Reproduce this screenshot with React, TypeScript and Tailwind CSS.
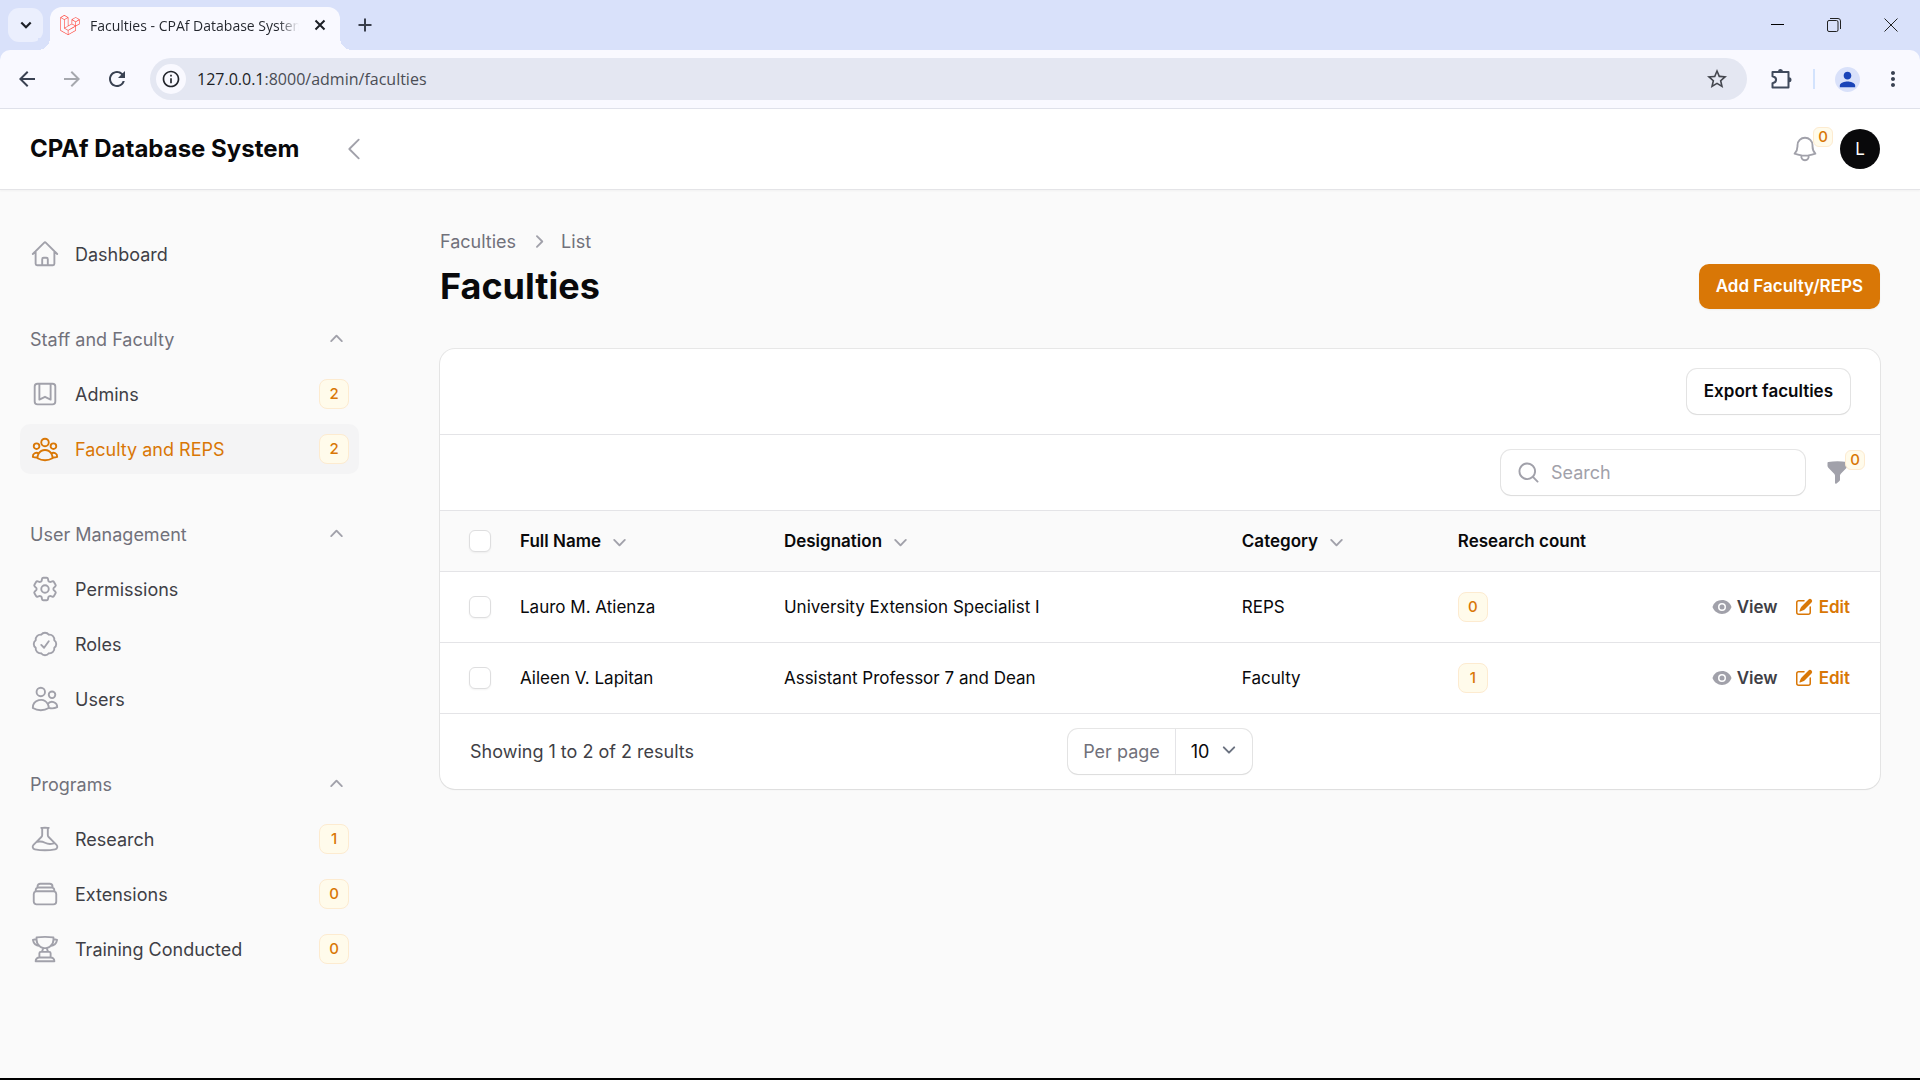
import type { ComponentType, ReactNode } from "react";
import {
  HiOutlineHome,
  HiOutlineBookmarkSquare,
  HiOutlineUserGroup,
  HiOutlineCog6Tooth,
  HiOutlineCheckBadge,
  HiOutlineUsers,
  HiOutlineBeaker,
  HiOutlineRectangleStack,
  HiOutlineTrophy,
  HiOutlineChevronLeft,
  HiOutlineBell,
} from "react-icons/hi2";
import {
  HiMiniChevronUp,
  HiMiniChevronDown,
  HiMiniChevronRight,
  HiMiniMagnifyingGlass,
  HiMiniFunnel,
  HiMiniEye,
  HiMiniPencilSquare,
} from "react-icons/hi2";
import {
  MdArrowBack,
  MdArrowForward,
  MdRefresh,
  MdOutlineInfo,
  MdStarBorder,
  MdPerson,
  MdMoreVert,
} from "react-icons/md";
import { SiLaravel } from "react-icons/si";

type Icon = ComponentType<{ className?: string }>;
type NavItem = { label: string; icon: Icon; badge?: number; active?: boolean };
type NavGroup = { label: string; items: NavItem[] };

const groups: NavGroup[] = [
  {
    label: "Staff and Faculty",
    items: [
      { label: "Admins", icon: HiOutlineBookmarkSquare, badge: 2 },
      { label: "Faculty and REPS", icon: HiOutlineUserGroup, badge: 2, active: true },
    ],
  },
  {
    label: "User Management",
    items: [
      { label: "Permissions", icon: HiOutlineCog6Tooth },
      { label: "Roles", icon: HiOutlineCheckBadge },
      { label: "Users", icon: HiOutlineUsers },
    ],
  },
  {
    label: "Programs",
    items: [
      { label: "Research", icon: HiOutlineBeaker, badge: 1 },
      { label: "Extensions", icon: HiOutlineRectangleStack, badge: 0 },
      { label: "Training Conducted", icon: HiOutlineTrophy, badge: 0 },
    ],
  },
];

const faculties = [
  { name: "Lauro M. Atienza", designation: "University Extension Specialist I", category: "REPS", research: 0 },
  { name: "Aileen V. Lapitan", designation: "Assistant Professor 7 and Dean", category: "Faculty", research: 1 },
];

function PuzzleIcon() {
  return (
    <svg viewBox="0 0 24 24" className="size-6" fill="none" stroke="#404a5c" strokeWidth="2" strokeLinejoin="round">
      <path d="M3.5 5h16v15.500h-16v-4.200c2.800-.6 3.600-1.800 3.600-3.500s-.8-2.900-3.600-3.500z" />
      <path d="M9 4.500a2.500 2.500 0 0 1 5 0zM20 10.200a2.500 2.500 0 0 1 0 5z" fill="#404a5c" stroke="none" />
    </svg>
  );
}

function BrowserChrome() {
  return (
    <div className="bg-[#d9e1fa] font-['Open_Sans',sans-serif]">
      <div className="flex h-[50px] items-end">
        <button aria-label="Search tabs" className="mb-2 ml-2 grid h-[34px] w-[35px] place-items-center rounded-[11px] bg-[#ebeffd]">
          <svg viewBox="0 0 12 12" className="size-3" fill="none" stroke="#1c1f26" strokeWidth="2.2">
            <path d="M1.300 3.500 6 8.200l4.700-4.700" />
          </svg>
        </button>
        <div className="relative ml-[7px] flex h-[43px] w-[290px] items-center rounded-t-[12px] bg-[#f9f9ff] pr-[10px] pb-[7px] pl-[10px]">
          <span className="absolute bottom-0 -left-3 size-3 bg-[radial-gradient(circle_at_0_0,#d9e1fa_12px,#f9f9ff_12px)]" />
          <span className="absolute -right-3 bottom-0 size-3 bg-[radial-gradient(circle_at_100%_0,#d9e1fa_12px,#f9f9ff_12px)]" />
          <SiLaravel className="size-5 shrink-0 text-[#ff4a40]" />
          <span className="ml-[10px] w-[209px] overflow-hidden bg-linear-to-r from-[#23262d] from-90% to-transparent bg-clip-text text-[14px] whitespace-nowrap text-transparent">
            Faculties - CPAf Database System
          </span>
          <button aria-label="Close tab" className="ml-auto grid size-5 place-items-center">
            <svg viewBox="0 0 12 12" className="size-3" fill="none" stroke="#1c1f26" strokeWidth="2">
              <path d="m1.500 1.500 9 9m0-9-9 9" />
            </svg>
          </button>
        </div>
        <button aria-label="New tab" className="mb-[15px] ml-[15px] grid size-5 place-items-center">
          <svg viewBox="0 0 14 14" className="size-[14px]" fill="none" stroke="#3a3f4c" strokeWidth="2">
            <path d="M7 .5v13M.5 7h13" />
          </svg>
        </button>
        <div className="ml-auto flex h-full items-center">
          <button aria-label="Minimize" className="grid h-full w-14 place-items-center">
            <svg viewBox="0 0 14 14" className="size-[14px]" stroke="#000" fill="none"><path d="M0 6.500h13" /></svg>
          </button>
          <button aria-label="Restore" className="grid h-full w-14 place-items-center">
            <svg viewBox="0 0 14 14" className="size-[14px]" stroke="#222" fill="none">
              <rect x=".5" y="2.500" width="10.500" height="11" rx="1.500" />
              <path d="M3 .5h8q2.500 0 2.500 2.500v8" />
            </svg>
          </button>
          <button aria-label="Close" className="grid h-full w-[58px] place-items-center">
            <svg viewBox="0 0 14 14" className="size-[14px]" stroke="#222" fill="none"><path d="M.5.5l13 13M13.500.5l-13 13" /></svg>
          </button>
        </div>
      </div>
      <div className="flex h-[59px] items-center rounded-t-[10px] border-b border-[#dfe1ea] bg-[#f9f9ff] pr-[15px] pl-[15px] text-[#3a4252]">
        <button aria-label="Back"><MdArrowBack className="size-6" /></button>
        <button aria-label="Forward" className="ml-[21px] text-[#a6a8ae]"><MdArrowForward className="size-6" /></button>
        <button aria-label="Reload" className="ml-[21px]"><MdRefresh className="size-6" /></button>
        <div className="ml-[21px] flex h-[42px] flex-1 items-center rounded-full bg-[#e4e7f2] pr-[18px] pl-[6px]">
          <button aria-label="Site information" className="grid size-[30px] place-items-center rounded-full bg-[#f9f9ff] text-[#22252c]">
            <MdOutlineInfo className="size-5" />
          </button>
          <div className="ml-[11px] flex-1 text-[16px] text-[#4a4d55]">
            <span className="text-[#1c1f26]">127.0.0.1</span>:8000/admin/faculties
          </div>
          <button aria-label="Bookmark" className="text-[#44474f]"><MdStarBorder className="size-6" /></button>
        </div>
        <button aria-label="Extensions" className="ml-[22px]"><PuzzleIcon /></button>
        <span className="ml-5 h-5 w-[2px] bg-[#d3e3fd]" />
        <button aria-label="Profile" className="ml-5 grid size-[25px] place-items-center rounded-full bg-[#d9e1fa] text-[#1a44b8]">
          <MdPerson className="size-[23px]" />
        </button>
        <button aria-label="Menu" className="ml-[21px]"><MdMoreVert className="size-6" /></button>
      </div>
    </div>
  );
}

function Badge({ children }: { children: ReactNode }) {
  return (
    <span className="inline-grid h-[30px] min-w-[30px] place-items-center rounded-lg border border-[#fdebd0] bg-amber-50 px-1 text-[15px] leading-5 font-medium text-[#d97706]">
      {children}
    </span>
  );
}

function CornerBadge({ place, children }: { place: string; children: ReactNode }) {
  return (
    <span className={`absolute grid size-5 place-items-center rounded-md border border-[#fdebd0] bg-amber-50 text-[15px] leading-4 font-medium text-[#d97706] ${place}`}>
      {children}
    </span>
  );
}

function NavLink({ item }: { item: NavItem }) {
  const ItemIcon = item.icon;
  return (
    <li>
      <a
        href="#"
        className={
          item.active
            ? "flex h-[50px] items-center gap-[15px] rounded-[10px] bg-[#f4f4f5] px-[10px] text-[#d97706]"
            : "flex h-[50px] items-center gap-[15px] rounded-[10px] px-[10px] text-[#3f3f46]"
        }
      >
        <ItemIcon className={item.active ? "size-[30px]" : "size-[30px] text-[#a1a1aa]"} />
        <span className="flex-1 text-[18px]">{item.label}</span>
        {item.badge !== undefined && <Badge>{item.badge}</Badge>}
      </a>
    </li>
  );
}

function Sidebar() {
  return (
    <nav className="flex w-[400px] shrink-0 flex-col gap-[35px] py-10 pr-[41px] pl-5">
      <ul>
        <NavLink item={{ label: "Dashboard", icon: HiOutlineHome }} />
      </ul>
      {groups.map((group) => (
        <section key={group.label} className="flex flex-col gap-[5px]">
          <button className="flex h-[50px] items-center justify-between px-[10px] text-[18px] text-[#71717a]">
            {group.label}
            <HiMiniChevronUp className="size-[25px] text-[#a1a1aa]" />
          </button>
          <ul className="flex flex-col gap-[5px]">
            {group.items.map((item) => (
              <NavLink key={item.label} item={item} />
            ))}
          </ul>
        </section>
      ))}
    </nav>
  );
}

function Checkbox({ label }: { label: string }) {
  return (
    <input
      type="checkbox"
      aria-label={label}
      className="-ml-px block size-[22px] appearance-none rounded-[6px] border border-[#dededf] bg-white shadow-xs checked:bg-amber-600"
    />
  );
}

function SortHeader({ children }: { children: ReactNode }) {
  return (
    <th className="px-[15px] text-left font-semibold">
      <button className="flex items-center gap-[6px]">
        {children}
        <HiMiniChevronDown className="size-[25px] text-[#a1a1aa]" />
      </button>
    </th>
  );
}

function FacultyTable() {
  return (
    <table className="w-full table-fixed border-y border-[#e4e4e7]">
      <colgroup>
        <col className="w-[65px]" />
        <col className="w-[18.33%]" />
        <col className="w-[31.8%]" />
        <col className="w-[15%]" />
        <col />
        <col className="w-[15%]" />
      </colgroup>
      <thead className="bg-[#fafafa]">
        <tr className="h-[61px]">
          <th className="pl-[30px]"><Checkbox label="Select all" /></th>
          <SortHeader>Full Name</SortHeader>
          <SortHeader>Designation</SortHeader>
          <SortHeader>Category</SortHeader>
          <th className="px-[15px] text-left font-semibold">Research count</th>
          <th aria-label="Actions" />
        </tr>
      </thead>
      <tbody>
        {faculties.map((f) => (
          <tr key={f.name} className="h-[71px] border-t border-[#e4e4e7]">
            <td className="pl-[30px]"><Checkbox label={`Select ${f.name}`} /></td>
            <td className="px-[15px]">{f.name}</td>
            <td className="px-[15px]">{f.designation}</td>
            <td className="px-[15px]">{f.category}</td>
            <td className="px-[15px]"><div className="flex"><Badge>{f.research}</Badge></div></td>
            <td className="pr-[30px]">
              <div className="flex justify-end gap-4 font-semibold">
                <a href="#" className="flex items-center gap-[5px] text-[#3f3f46]">
                  <HiMiniEye className="size-5 text-[#a1a1aa]" />
                  View
                </a>
                <a href="#" className="flex items-center gap-[5px] text-[#d97706]">
                  <HiMiniPencilSquare className="size-5" />
                  Edit
                </a>
              </div>
            </td>
          </tr>
        ))}
      </tbody>
    </table>
  );
}

export default function App() {
  return (
    <div className="flex min-h-screen flex-col border-b-2 border-black bg-[#fafafa] font-['Inter',sans-serif] text-[17px] leading-[25px] text-[#09090b]">
      <BrowserChrome />
      <header className="flex h-20 items-center bg-white pr-10 pl-[30px] shadow-[0_1px_0_#e4e4e7,0_2px_2px_#0000000a]">
        <a href="#" className="text-[24px] leading-8 font-bold">CPAf Database System</a>
        <button aria-label="Collapse sidebar" className="ml-10 text-[#a1a1aa]">
          <HiOutlineChevronLeft className="size-[30px]" />
        </button>
        <button aria-label="Notifications" className="relative ml-auto text-[#a1a1aa]">
          <HiOutlineBell className="size-[30px]" />
          <CornerBadge place="-top-[7px] -right-[13px]">0</CornerBadge>
        </button>
        <button aria-label="Account" className="ml-5 grid size-10 place-items-center rounded-full bg-[#09090b] text-white">L</button>
      </header>
      <div className="flex flex-1">
        <Sidebar />
        <main className="min-w-0 flex-1 px-10 py-10">
          <div className="flex items-end justify-between">
            <div>
              <nav aria-label="Breadcrumb" className="flex items-center gap-[10px] text-[18px] text-[#71717a]">
                <a href="#">Faculties</a>
                <HiMiniChevronRight className="size-[25px] text-[#a1a1aa]" />
                <a href="#">List</a>
              </nav>
              <h1 className="mt-[10px] text-[36px] leading-[45px] font-bold">Faculties</h1>
            </div>
            <button className="h-[45px] rounded-[10px] bg-[#d97706] px-[17px] font-semibold text-white shadow-xs">Add Faculty/REPS</button>
          </div>

          <section className="mt-10 overflow-hidden rounded-[15px] bg-white shadow-xs ring-1 ring-[#09090b]/8">
            <div className="flex justify-end border-b border-[#e4e4e7] px-[30px] py-5">
              <button className="h-[45px] rounded-[10px] px-[17px] font-semibold shadow-xs ring-1 ring-[#09090b]/10">Export faculties</button>
            </div>
            <div className="flex items-center justify-end gap-5 px-[30px] py-[15px]">
              <label className="flex h-[45px] w-[304px] items-center gap-[10px] rounded-[10px] pr-4 pl-[15px] shadow-xs ring-1 ring-[#09090b]/10">
                <HiMiniMagnifyingGlass className="size-[25px] shrink-0 text-[#a1a1aa]" />
                <input type="search" aria-label="Search" placeholder="Search" className="w-full min-w-0 text-[18px] outline-none placeholder:text-[#a1a1aa]" />
              </label>
              <button aria-label="Filter" className="relative text-[#a1a1aa]">
                <HiMiniFunnel className="size-[25px]" />
                <CornerBadge place="-top-[10px] -right-[15px]">0</CornerBadge>
              </button>
            </div>
            <FacultyTable />
            <div className="grid grid-cols-[1fr_auto_1fr] items-center px-[30px] py-[15px] text-[18px]">
              <span className="text-[#3f3f46]">Showing 1 to 2 of 2 results</span>
              <label className="flex h-[45px] items-center rounded-[10px] shadow-xs ring-1 ring-[#09090b]/10">
                <span className="flex h-full items-center border-r border-[#e4e4e7] px-[15px] text-[#71717a]">Per page</span>
                <span className="relative flex items-center">
                  <select defaultValue="10" className="h-[45px] w-[76px] appearance-none bg-transparent pl-[15px] outline-none">
                    <option>5</option>
                    <option>10</option>
                    <option>25</option>
                    <option>50</option>
                  </select>
                  <svg viewBox="0 0 20 20" className="pointer-events-none absolute right-[10px] mb-1 size-[26px]" fill="none" stroke="#6b7280" strokeWidth="1.500" strokeLinecap="round" strokeLinejoin="round">
                    <path d="m6 8 4 4 4-4" />
                  </svg>
                </span>
              </label>
            </div>
          </section>
        </main>
      </div>
    </div>
  );
}
